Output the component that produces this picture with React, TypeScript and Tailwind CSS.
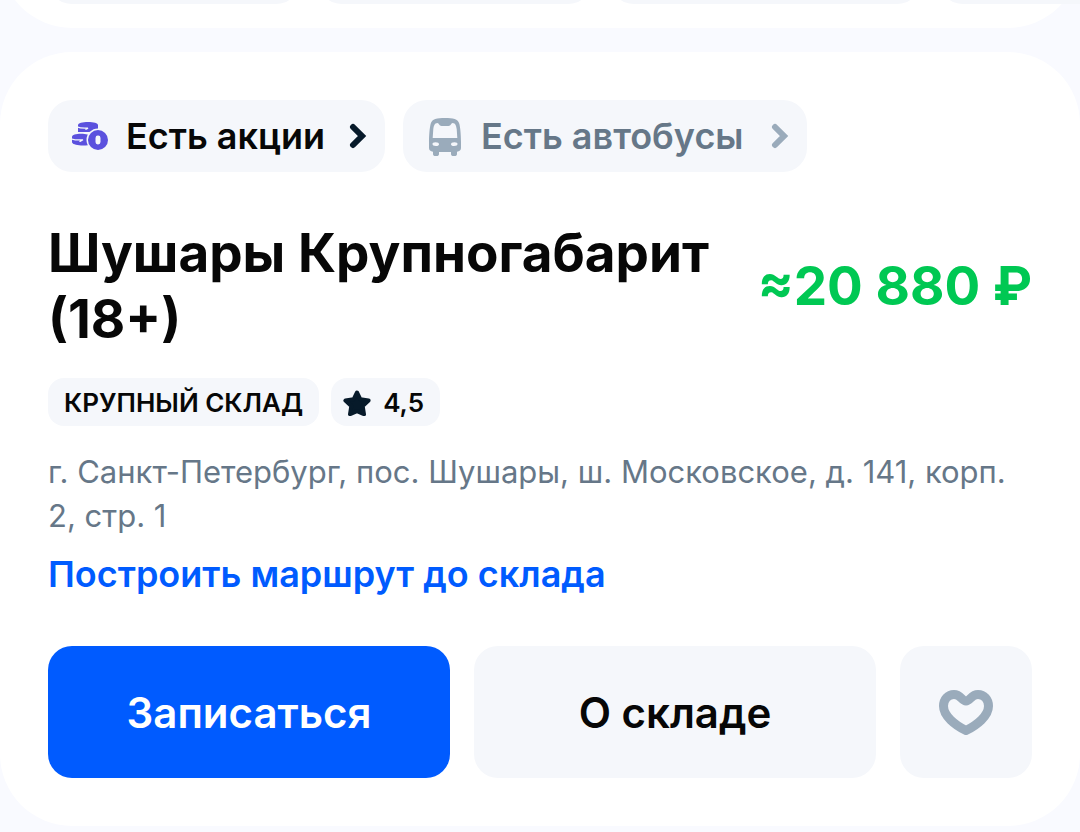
import type { ReactNode } from "react";

type ChipProps = {
  icon: ReactNode;
  label: string;
  className: string;
  arrowClassName: string;
};

const CoinsIcon = () => (
  <svg width="36" height="36" viewBox="0 0 36 36" fill="#5b51de" aria-hidden="true">
    <path d="M6 7c0-2 4.500-3.100 10-3.100S26 5 26 7v7H6z" />
    <path d="M0 19c0-2.200 4-3.300 9-3.300s9 1.100 9 3.300v8c-2 .4-5 .6-9 .4-5-.2-9-1.400-9-3.400z" />
    <g fill="none" stroke="#f5f7fb" strokeLinecap="round">
      <path d="M5 8.900c3 1.300 7 1.500 11 1.200l-2 1.200" strokeWidth="1.300" />
      <path d="M-1 20.700c3 1.300 7 1.500 12 1.100l-3 1.600" strokeWidth="1.300" />
    </g>
    <circle cx="26" cy="22" r="11.500" fill="#f5f7fb" />
    <circle cx="26" cy="22" r="10" />
    <rect x="23.500" y="17.500" width="5" height="9" rx="2.400" fill="#f5f7fb" />
  </svg>
);

const BusIcon = () => (
  <svg width="36" height="40" viewBox="0 -1 36 40" fill="#9aabbb" aria-hidden="true">
    <path
      fillRule="evenodd"
      d="M18 1C10 1 5 1.500 3.600 7 2.600 11 2 19 2 25v6c0 2 1.500 3.500 4 3.800V37c0 3 6 3 6 0v-2h12v2c0 3 6 3 6 0v-2.200c2.500-.3 4-1.800 4-3.800v-6c0-6-.6-14-1.600-18C31 1.500 26 1 18 1zM10.500 6c1.500 0 1.500 3 4 3h7c2.500 0 2.500-3 4-3 3 0 3.700 3 4.200 6l.6 9H5.700l.6-9c.5-3 1.200-6 4.200-6zM8.500 25.200c2.500 0 3.500.8 3.500 2s-1 1.800-3 1.800c-2.500 0-3.500-1-3.500-2s.8-1.800 3-1.800zm19 0c2.200 0 3 .8 3 1.800s-1 2-3.500 2c-2 0-3-.6-3-1.800s1-2 3.500-2z"
    />
  </svg>
);

const StarIcon = () => (
  <svg width="28" height="28" viewBox="0 -1 28 28" aria-hidden="true">
    <path
      d="M14 3.500l3.400 6.800 8.200 1.200-5.900 5.500 1.300 8.200-7-3-7 3L8.300 17l-5.900-5.500 8.200-1.200z"
      fill="#071a2a"
      stroke="#071a2a"
      strokeWidth="4"
      strokeLinejoin="round"
    />
  </svg>
);

const HeartIcon = () => (
  <svg width="54" height="50" viewBox="0 -3 54 50" fill="none" aria-hidden="true">
    <path
      d="M27 40.500C16 35 4.500 26 4.500 16 4.500 9.500 9 4.500 15 4.500c7 0 7.500 6.500 12 6.500s5-6.500 12-6.500c6 0 10.500 5 10.500 11.500 0 10-11.500 19-22.500 24.500z"
      stroke="#9aabbb"
      strokeWidth="9"
      strokeLinejoin="round"
    />
  </svg>
);

const Arrow = ({ className }: { className: string }) => (
  <svg width="18" height="26" viewBox="0 0 18 26" fill="none" className={className} aria-hidden="true">
    <path
      d="M4 4l9 9-9 9"
      stroke="currentColor"
      strokeWidth="6"
      strokeLinecap="round"
      strokeLinejoin="miter"
    />
  </svg>
);

const Chip = ({ icon, label, className, arrowClassName }: ChipProps) => (
  <button
    type="button"
    className={`flex h-[72px] items-center rounded-3xl bg-[#f5f7fb] pr-[18px] pl-6 text-[36px] font-semibold ${className}`}
  >
    {icon}
    <span className="ml-[18px] whitespace-nowrap">{label}</span>
    <Arrow className={`ml-auto ${arrowClassName}`} />
  </button>
);

const PreviousCard = () => (
  <div className="flex h-7 flex-col justify-end overflow-hidden">
    <div className="flex shrink-0 gap-[18px] rounded-b-[72px] bg-white px-12 pb-6">
      <div className="h-[72px] w-[252px] shrink-0 rounded-3xl bg-[#f5f7fb]" />
      <div className="h-[72px] w-[274px] shrink-0 rounded-3xl bg-[#f5f7fb]" />
      <div className="h-[72px] w-[311px] shrink-0 rounded-3xl bg-[#f5f7fb]" />
      <div className="h-[72px] w-[252px] shrink-0 rounded-3xl bg-[#f5f7fb]" />
    </div>
  </div>
);

const WarehouseCard = () => (
  <article className="rounded-[72px] bg-white p-12">
    <div className="flex gap-[18px]">
      <Chip
        icon={<CoinsIcon />}
        label="Есть акции"
        className="w-[337px] text-[#070707]"
        arrowClassName="text-[#071a2a]"
      />
      <Chip
        icon={<BusIcon />}
        label="Есть автобусы"
        className="w-[404px] text-[#667788]"
        arrowClassName="text-[#9aabbb]"
      />
    </div>

    <div className="mt-12 flex items-center justify-between gap-6">
      <h1 className="w-[680px] text-[53px] leading-[66px] font-bold text-[#070707]">
        Шушары Крупногабарит (18+)
      </h1>
      <p className="text-[53px] leading-[66px] font-bold whitespace-nowrap text-[#00c853]">≈20 880 ₽</p>
    </div>

    <div className="mt-[26px] flex gap-3 text-[26px] font-semibold text-[#070707]">
      <span className="flex h-12 items-center rounded-2xl bg-[#f5f7fb] px-4 whitespace-nowrap">
        КРУПНЫЙ СКЛАД
      </span>
      <span className="flex h-12 items-center gap-3 rounded-2xl bg-[#f5f7fb] pr-4 pl-3">
        <StarIcon />
        4,5
      </span>
    </div>

    <address className="mt-6 text-[31px] leading-[44px] text-[#667788] not-italic">
      г. Санкт-Петербург, пос. Шушары, ш. Московское, д. 141, корп. 2, стр. 1
    </address>
    <a href="#route" className="mt-3 block text-[36px] leading-[48px] font-semibold text-[#005bff]">
      Построить маршрут до склада
    </a>

    <div className="mt-12 flex gap-6 text-[42px] font-semibold">
      <button type="button" className="h-[132px] flex-1 rounded-3xl bg-[#005bff] text-white">
        Записаться
      </button>
      <button type="button" className="h-[132px] flex-1 rounded-3xl bg-[#f5f7fb] text-[#070707]">
        О складе
      </button>
      <button
        type="button"
        aria-label="В избранное"
        className="flex h-[132px] w-[132px] items-center justify-center rounded-3xl bg-[#f5f7fb]"
      >
        <HeartIcon />
      </button>
    </div>
  </article>
);

const App = () => {
  return (
    <main className="flex min-h-screen flex-col gap-6 overflow-hidden bg-[#f9faff] font-['Inter','Liberation_Sans',sans-serif]">
      <PreviousCard />
      <WarehouseCard />
    </main>
  );
};

export default App;
